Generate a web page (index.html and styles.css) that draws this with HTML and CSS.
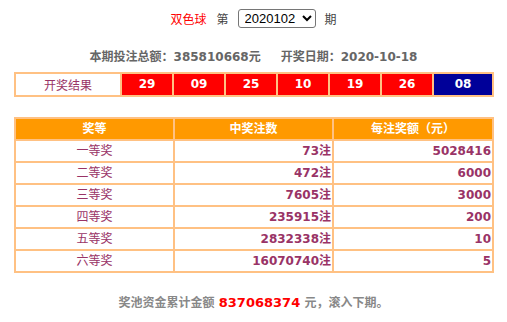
FILE: index.html
```html
<!DOCTYPE html>
<html lang="zh-CN">
<head>
<meta charset="utf-8">
<title>双色球开奖结果</title>
<link rel="stylesheet" href="styles.css">
</head>
<body>
<div class="page">
  <div class="issue">
    <span class="game">双色球</span>
    <span class="label">第</span>
    <select class="issue-select"><option>2020102</option></select>
    <span class="label">期</span>
  </div>
  <div class="summary">
    <span>本期投注总额：385810668元</span>
    <span>开奖日期：2020-10-18</span>
  </div>
  <div class="result">
    <div class="result-title">开奖结果</div>
    <div class="ball red">29</div>
    <div class="ball red">09</div>
    <div class="ball red">25</div>
    <div class="ball red">10</div>
    <div class="ball red">19</div>
    <div class="ball red">26</div>
    <div class="ball blue">08</div>
  </div>
  <div class="prize">
    <div class="th">奖等</div><div class="th">中奖注数</div><div class="th">每注奖额（元）</div>
    <div class="td c">一等奖</div><div class="td r">73注</div><div class="td r">5028416</div>
    <div class="td c">二等奖</div><div class="td r">472注</div><div class="td r">6000</div>
    <div class="td c">三等奖</div><div class="td r">7605注</div><div class="td r">3000</div>
    <div class="td c">四等奖</div><div class="td r">235915注</div><div class="td r">200</div>
    <div class="td c">五等奖</div><div class="td r">2832338注</div><div class="td r">10</div>
    <div class="td c">六等奖</div><div class="td r">16070740注</div><div class="td r">5</div>
  </div>
  <div class="pool">奖池资金累计金额 <span class="pool-num">837068374</span> 元，滚入下期。</div>
</div>
</body>
</html>
```
FILE: styles.css
```css
html, body {
  margin: 0;
  padding: 0;
  background: #fff;
}
body {
  font-family: "DejaVu Sans", "Noto Sans CJK SC", sans-serif;
  font-size: 12px;
}
.page {
  width: 507px;
  padding-top: 8px;
}
.issue {
  height: 20px;
  display: flex;
  justify-content: center;
  align-items: center;
  gap: 9px;
  font-family: "Noto Sans CJK SC", sans-serif;
  font-size: 12px;
}
.game { color: #ff0000; margin-right: 1px; }
.label { color: #444; }
.issue-select {
  width: 78px;
  height: 19px;
  font-family: "Liberation Sans", sans-serif;
  font-size: 13px;
  color: #000;
  padding: 0 0 0 2px;
  border: 1px solid #767676;
  border-radius: 3px;
  background: #fff;
}
.summary {
  margin-top: 21px;
  height: 16px;
  line-height: 16px;
  display: flex;
  justify-content: center;
  gap: 20px;
  color: #666;
  font-weight: bold;
}
.result {
  margin: 7px 0 0 14px;
  width: 476px;
  padding: 2px;
  background: #ffc183;
  display: grid;
  grid-template-columns: 104px repeat(6, 50px) 1fr;
  grid-auto-rows: 21px;
  gap: 2px;
}
.result-title {
  background: #fff;
  color: #993366;
  text-align: center;
  line-height: 21px;
  font-family: "Noto Sans CJK SC", sans-serif;
}
.ball {
  color: #fff;
  font-weight: bold;
  text-align: center;
  line-height: 21px;
}
.red { background: #ff0000; }
.blue { background: #000099; }
.prize {
  margin: 20px 0 0 14px;
  width: 476px;
  padding: 2px;
  background: #ffc183;
  display: grid;
  grid-template-columns: 157px 157px 1fr;
  grid-auto-rows: 20px;
  gap: 2px;
}
.th {
  background: #ff9900;
  color: #fff;
  font-weight: bold;
  text-align: center;
  line-height: 20px;
}
.td {
  background: #fff;
  color: #993366;
  font-weight: bold;
  line-height: 20px;
  padding: 0 1px;
}
.c { text-align: center; font-weight: normal; }
.r { text-align: right; }
.pool {
  margin-top: 22px;
  height: 16px;
  line-height: 16px;
  text-align: center;
  color: #888;
  font-weight: bold;
}
.pool-num {
  color: #ff0000;
  font-size: 13px;
}
```
